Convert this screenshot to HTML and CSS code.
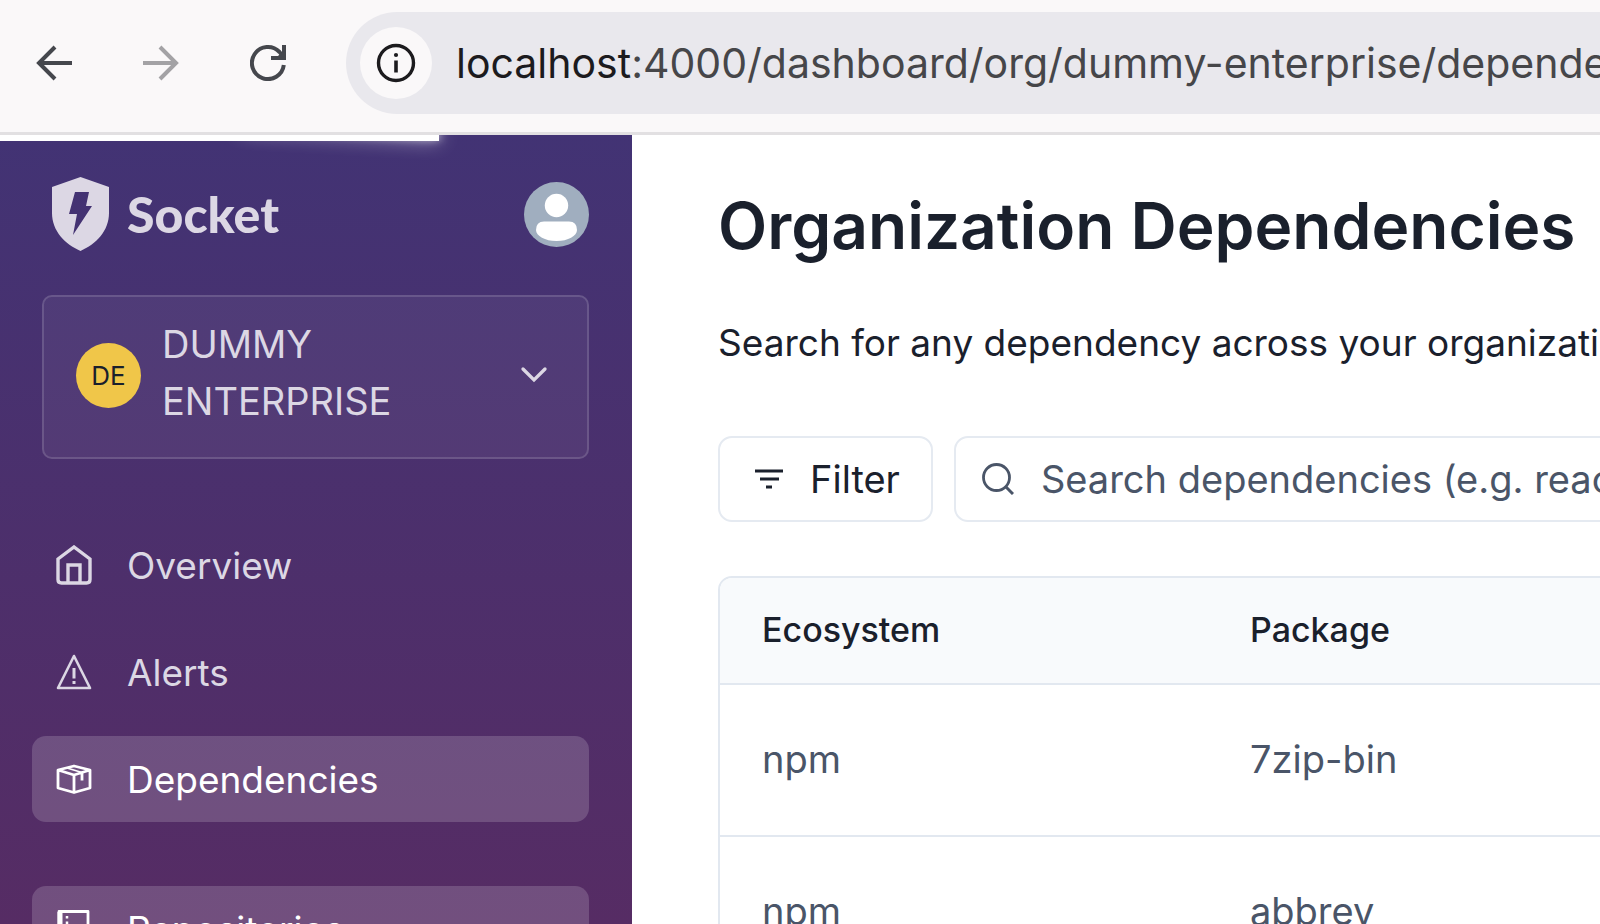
FILE: index.html
```html
<!DOCTYPE html>
<html lang="en">
<head>
<meta charset="utf-8">
<title>Organization Dependencies - Socket</title>
<link rel="stylesheet" href="styles.css">
</head>
<body>
<header class="toolbar">
  <div class="toolbar-buttons">
    <button class="tool" type="button" aria-label="Back">
      <svg viewBox="0 0 36 36" width="36" height="36"><path d="M36 18H3M19 2 3 18l16 16" fill="none" stroke="currentColor" stroke-width="4"/></svg>
    </button>
    <button class="tool" type="button" aria-label="Forward" disabled>
      <svg viewBox="0 0 36 36" width="36" height="36"><path d="M0 18h33M17 2l16 16-16 16" fill="none" stroke="currentColor" stroke-width="4"/></svg>
    </button>
    <button class="tool" type="button" aria-label="Reload">
      <svg viewBox="0 0 36 36" width="36" height="36"><path d="M33.800 20A16 16 0 1 1 29.500 7L33 11" fill="none" stroke="currentColor" stroke-width="4"/><path d="M36 0v15H21v-4h7l4-4V0z" fill="currentColor"/></svg>
    </button>
  </div>
  <div class="address">
    <button class="site-info" type="button" aria-label="View site information">
      <svg viewBox="0 0 40 40" width="40" height="40"><circle cx="20" cy="20" r="17.500" fill="none" stroke="currentColor" stroke-width="3.400"/><path d="M20 17.500v12" stroke="currentColor" stroke-width="3.600"/><circle cx="20" cy="12" r="2.100" fill="currentColor"/></svg>
    </button>
    <div class="url"><span class="host">localhost</span>:4000/dashboard/org/dummy-enterprise/dependencies</div>
  </div>
</header>
<div class="page">
  <aside class="sidebar">
    <div class="brand-row">
      <a class="brand" href="#">
        <svg viewBox="0 0 57 74" width="57" height="74"><path fill="currentColor" fill-rule="evenodd" d="M28.500 0 57 10v26c0 18-13 31-28.500 38C13 67 0 54 0 36V10zM23 15h14l-3 14h6L21 58l4-21h-8z"/></svg>
        <span>Socket</span>
      </a>
      <button class="avatar" type="button" aria-label="Account">
        <svg viewBox="0 0 65 65" width="65" height="65"><circle cx="32.500" cy="32.500" r="32.500" fill="#a0aebf"/><circle cx="32.500" cy="23.500" r="11.700" fill="#fff"/><path d="M20 39.500h25q8 0 8 8.500c0 6-9 11-20.500 11S12 54 12 48q0-8.500 8-8.500z" fill="#fff"/></svg>
      </button>
    </div>
    <button class="org" type="button">
      <span class="org-badge">DE</span>
      <span class="org-name">DUMMY ENTERPRISE</span>
      <svg viewBox="0 0 28 18" width="28" height="18"><path d="M3 3l11 11L25 3" fill="none" stroke="currentColor" stroke-width="3.300" stroke-linecap="round"/></svg>
    </button>
    <nav class="nav">
      <a class="nav-item" href="#">
        <svg viewBox="0 0 36 40" width="36" height="40"><path d="M2 14v20.500q0 3.500 3.500 3.500h25q3.500 0 3.500-3.500V14L18 2zM12 38V20h12v18" fill="none" stroke="currentColor" stroke-width="3.400"/></svg>
        <span>Overview</span>
      </a>
      <a class="nav-item" href="#">
        <svg viewBox="0 0 36 36" width="36" height="36"><path d="M18 2 34 34H2z" fill="none" stroke="currentColor" stroke-width="2.600" stroke-linejoin="round"/><path d="M18 14v10.500M18 27v3" stroke="currentColor" stroke-width="3"/></svg>
        <span>Alerts</span>
      </a>
      <a class="nav-item active" href="#">
        <svg viewBox="0 0 36 30" width="36" height="30"><path d="M2 6 18 2l16 4v18l-16 4.500L2 24zM2 6l16 5L34 6M18 11v17.500M26 8.500v8" fill="none" stroke="currentColor" stroke-width="2.800" stroke-linejoin="round"/><path d="M11 4l15 4.500" stroke="currentColor" stroke-width="1.600"/></svg>
        <span>Dependencies</span>
      </a>
      <a class="nav-item active spaced" href="#">
        <svg viewBox="0 0 36 38" width="36" height="38"><path d="M3 1.500h29v35H3z" fill="none" stroke="currentColor" stroke-width="2.800" stroke-linejoin="round"/><path d="M4 2v34" stroke="currentColor" stroke-width="5"/><path d="M11 6v26" stroke="currentColor" stroke-width="2.500" stroke-dasharray="2.500 3"/></svg>
        <span>Repositories</span>
      </a>
    </nav>
  </aside>
  <main class="main">
    <h1 class="title">Organization Dependencies</h1>
    <p class="intro">Search for any dependency across your organization</p>
    <div class="controls">
      <button class="filter" type="button">
        <svg viewBox="0 0 28 20" width="28" height="20"><path d="M0 2h28M5 10h19M11 18h6" stroke="currentColor" stroke-width="2.800"/></svg>
        <span>Filter</span>
      </button>
      <label class="search">
        <svg viewBox="0 0 32 32" width="32" height="32"><circle cx="14.500" cy="14.500" r="13" fill="none" stroke="currentColor" stroke-width="2.800"/><path d="M24 24l7 7" stroke="currentColor" stroke-width="3"/></svg>
        <input type="text" aria-label="Search dependencies" placeholder="Search dependencies (e.g. react)">
      </label>
    </div>
    <div class="table-card">
      <table class="deps">
        <thead><tr><th>Ecosystem</th><th>Package</th></tr></thead>
        <tbody>
          <tr><td>npm</td><td>7zip-bin</td></tr>
          <tr><td>npm</td><td>abbrev</td></tr>
        </tbody>
      </table>
    </div>
  </main>
  <div class="progress"></div>
</div>
</body>
</html>
```
FILE: styles.css
```css
* { box-sizing: border-box; }

body {
  margin: 0;
  height: 100vh;
  overflow: hidden;
  display: flex;
  flex-direction: column;
  font-family: Inter, "Liberation Sans", sans-serif;
  font-size: 38px;
  color: #1a202c;
  background: #fff;
}

button {
  margin: 0;
  padding: 0;
  border: 0;
  background: none;
  font: inherit;
  color: inherit;
}

a { color: inherit; text-decoration: none; }
svg { display: block; flex: none; }

/* Browser toolbar */
.toolbar {
  flex: none;
  display: flex;
  gap: 60px;
  padding: 12px 0 18px 36px;
  background: #faf8f9;
  border-bottom: 3px solid #e2e0e2;
}

.toolbar-buttons { display: flex; align-items: center; gap: 71px; }
.tool { color: #45474d; }
.tool:disabled { color: #a3a2a5; }

.address {
  flex: 1;
  min-width: 0;
  display: flex;
  align-items: center;
  gap: 24px;
  padding: 15px 0 15px 14px;
  overflow: hidden;
  background: #e9e8ed;
  border-radius: 51px 0 0 51px;
}

.site-info {
  flex: none;
  display: grid;
  place-items: center;
  width: 72px;
  height: 72px;
  border-radius: 50%;
  background: #faf8f9;
  color: #1c1b1e;
}

.url { font-size: 41px; line-height: 50px; white-space: nowrap; color: #464649; }
.host { color: #1c1b1e; }

/* Page */
.page { position: relative; flex: 1; min-height: 0; display: flex; overflow: hidden; }

.progress {
  position: absolute;
  top: 0;
  left: 0;
  width: 439px;
  height: 6px;
  background: #fff;
}

/* Glow trailing the loading bar */
.progress::after {
  content: "";
  position: absolute;
  right: 0;
  top: 0;
  width: 200px;
  height: 6px;
  transform: rotate(3deg) translate(0, -8px);
  box-shadow: 0 0 20px #fff, 0 0 10px #fff;
}

.sidebar {
  flex: none;
  width: 632px;
  padding: 42px 43px 0 32px;
  overflow: hidden;
  color: #dcd7e4;
  background: linear-gradient(#423374, #562c64);
}

.brand-row {
  display: flex;
  align-items: center;
  justify-content: space-between;
  padding-left: 20px;
}

.brand {
  display: flex;
  align-items: center;
  gap: 18px;
  font-family: Lato, sans-serif;
  font-size: 50px;
  font-weight: 900;
  line-height: 60px;
}

.org {
  display: flex;
  align-items: center;
  width: calc(100% - 10px);
  margin: 44px 0 63px 10px;
  padding: 18px 39px 22px 32px;
  border: 2px solid rgba(255, 255, 255, 0.14);
  border-radius: 10px;
  background: rgba(255, 255, 255, 0.05);
  text-align: left;
}

.org-badge {
  flex: none;
  display: grid;
  place-items: center;
  width: 65px;
  height: 65px;
  margin-right: 21px;
  border-radius: 50%;
  background: #f0c649;
  color: #1a202c;
  font-size: 26px;
}

.org-name { flex: 1; padding: 1px 100px 5px 0; line-height: 57px; }

.nav { display: flex; flex-direction: column; gap: 21px; }

.nav-item {
  display: flex;
  align-items: center;
  gap: 35px;
  height: 86px;
  padding: 0 24px;
  border-radius: 14px;
  font-size: 37px;
}

.active { color: #fff; background: rgba(255, 255, 255, 0.17); }
.spaced { margin-top: 43px; }

.main {
  flex: 1;
  min-width: 0;
  overflow: hidden;
  padding: 49px 0 0 86px;
}

.title { margin: 0; font-size: 64px; line-height: 84px; font-weight: 600; white-space: nowrap; }
.intro { margin: 46px 0 64px; font-size: 37px; line-height: 58px; white-space: nowrap; }

.controls { display: flex; gap: 21px; }

.filter, .search {
  display: flex;
  align-items: center;
  gap: 27px;
  height: 86px;
  border: 2px solid #e5eaf1;
  border-radius: 14px;
}

.filter { flex: none; padding: 0 31px 0 35px; }

.search {
  flex: 1;
  min-width: 1000px;
  padding-left: 26px;
  color: #4a5568;
}

.search input {
  flex: 1;
  min-width: 0;
  padding: 0;
  border: 0;
  outline: 0;
  background: none;
  font: inherit;
  color: inherit;
}

.search input::placeholder { color: #4a5568; opacity: 1; }

.table-card {
  min-width: 1235px;
  margin-top: 54px;
  border: 2px solid #e2e8f0;
  border-radius: 14px;
  overflow: hidden;
}

.deps { width: 100%; border-collapse: collapse; table-layout: fixed; text-align: left; }
.deps th, .deps td { padding: 0 42px 2px; border-bottom: 2px solid #e2e8f0; }
.deps th { height: 106px; font-size: 34px; font-weight: 500; background: #f8fafc; }
.deps th:first-child { width: 488px; }
.deps td { height: 152px; color: #4a5568; }
```
